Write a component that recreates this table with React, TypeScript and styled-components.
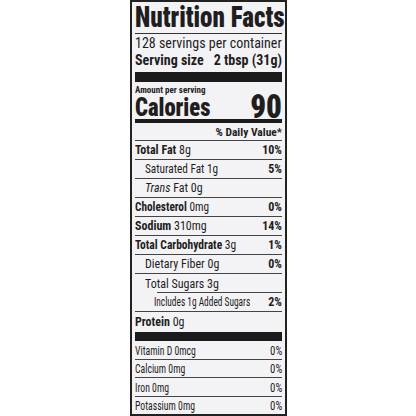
import React from 'react';
import styled, {createGlobalStyle} from 'styled-components';

const GlobalStyle = createGlobalStyle`
  html, body {
    margin: 0;
    padding: 0;
    background: #ffffff;
  }
`;

type Nutrient = {
  name: string;
  amount: string;
  dv?: string;
  bold?: boolean;
  indent?: number;
  italic?: boolean;
  ruleInset?: number;
  sx?: number;
};

const nutrients: Nutrient[] = [
  {name: 'Total Fat', amount: '8g', dv: '10%', bold: true},
  {name: 'Saturated Fat', amount: '1g', dv: '5%', indent: 10, sx: 0.94},
  {name: 'Trans', amount: 'Fat 0g', indent: 10, italic: true},
  {name: 'Cholesterol', amount: '0mg', dv: '0%', bold: true, sx: 0.94},
  {name: 'Sodium', amount: '310mg', dv: '14%', bold: true},
  {name: 'Total Carbohydrate', amount: '3g', dv: '1%', bold: true, sx: 0.96},
  {name: 'Dietary Fiber', amount: '0g', dv: '0%', indent: 10},
  {name: 'Total Sugars', amount: '3g', indent: 10, ruleInset: 22},
  {name: 'Includes 1g Added Sugars', amount: '', dv: '2%', indent: 19, sx: 0.78},
];

const vitamins = [
  {name: 'Vitamin D 0mcg', dv: '0%'},
  {name: 'Calcium 0mg', dv: '0%'},
  {name: 'Iron 0mg', dv: '0%'},
  {name: 'Potassium 0mg', dv: '0%'},
];

function App() {
  return (
    <Page>
      <GlobalStyle/>
      <Label>
        <Title><Txt $sx={0.85}>Nutrition Facts</Txt></Title>
        <Servings><Txt>128 servings per container</Txt></Servings>
        <ServingSize>
          <Txt>Serving size</Txt>
          <Txt $right>2 tbsp (31g)</Txt>
        </ServingSize>
        <AmountPer><Txt>Amount per serving</Txt></AmountPer>
        <CaloriesRow>
          <CaloriesLabel $sx={0.87}>Calories</CaloriesLabel>
          <CaloriesValue $right $sx={0.91}>90</CaloriesValue>
        </CaloriesRow>
        <DailyHeader><Txt $right>% Daily Value*</Txt></DailyHeader>
        {nutrients.map(n => (
          <Row key={n.name} $indent={n.indent || 0} $ruleInset={n.ruleInset}>
            <RowName $sx={n.sx}>
              {n.bold ? <b>{n.name}</b> : n.italic ? <i>{n.name}</i> : n.name}
              {n.amount ? ` ${n.amount}` : ''}
            </RowName>
            {n.dv && <Percent $right>{n.dv}</Percent>}
          </Row>
        ))}
        <ProteinRow>
          <Txt><b>Protein</b> 0g</Txt>
        </ProteinRow>
        {vitamins.map((v, i) => (
          <VitaminRow key={v.name} $last={i === vitamins.length - 1}>
            <RowName $sx={0.72}>{v.name}</RowName>
            <Txt $right $sx={0.8}>{v.dv}</Txt>
          </VitaminRow>
        ))}
      </Label>
    </Page>
  );
}

export default App;

const Page = styled.div`
  width: 416px;
  height: 416px;
  display: flex;
  justify-content: center;
  background: #ffffff;
  font-family: Roboto, "Liberation Sans", Arial, sans-serif;
  font-stretch: 75%;
  color: #1f1d1e;
`;

const Label = styled.div`
  box-sizing: border-box;
  width: 157px;
  height: 416px;
  margin-left: 1px;
  border: 2px solid #222;
  padding: 0 3px;
  background: #f3f3f5;
  display: flex;
  flex-direction: column;
  overflow: hidden;
`;

// condensed text: the label's type is narrower than any installed face
const Txt = styled.span<{$right?: boolean; $sx?: number}>`
  display: inline-block;
  white-space: nowrap;
  transform: scaleX(${p => p.$sx ?? 1});
  transform-origin: ${p => (p.$right ? 'right' : 'left')} center;

  b {
    font-weight: 700;
  }
`;

const RowName = styled(Txt)`
  flex: 1 1 0;
  min-width: 0;
`;

const Title = styled.div`
  box-sizing: border-box;
  height: 32px;
  border-bottom: 1px solid #333;
  font-size: 29.5px;
  font-weight: 900;
  line-height: 30px;
  white-space: nowrap;
`;

const Servings = styled.div`
  height: 17px;
  font-size: 14px;
  line-height: 19px;
`;

const ServingSize = styled.div`
  box-sizing: border-box;
  height: 31px;
  border-bottom: 10px solid #1b1b1b;
  display: flex;
  justify-content: space-between;
  font-size: 14px;
  font-weight: 700;
  line-height: 19px;
`;

const AmountPer = styled.div`
  box-sizing: border-box;
  height: 13px;
  padding-top: 3px;
  font-size: 9px;
  font-weight: 700;
  line-height: 10px;
`;

const CaloriesRow = styled.div`
  box-sizing: border-box;
  height: 28px;
  border-bottom: 4px solid #1b1b1b;
  display: flex;
  justify-content: space-between;
  align-items: flex-end;
  font-weight: 900;
`;

const CaloriesLabel = styled(Txt)`
  font-size: 26px;
  line-height: 24px;
`;

const CaloriesValue = styled(Txt)`
  font-size: 34px;
  line-height: 26px;
`;

const DailyHeader = styled.div`
  box-sizing: border-box;
  height: 18px;
  border-bottom: 1px solid #444;
  text-align: right;
  font-size: 11.5px;
  font-weight: 700;
  line-height: 18px;
`;

const Row = styled.div<{$indent: number; $ruleInset?: number}>`
  position: relative;
  box-sizing: border-box;
  height: 19px;
  padding-left: ${p => p.$indent}px;
  display: flex;
  justify-content: space-between;
  align-items: center;
  font-size: 12px;
  border-bottom: ${p => (p.$ruleInset ? 'none' : '1px solid #444')};

  &::after {
    content: '';
    display: ${p => (p.$ruleInset ? 'block' : 'none')};
    position: absolute;
    left: ${p => p.$ruleInset || 0}px;
    right: 0;
    bottom: 0;
    border-bottom: 1px solid #444;
  }
`;

const Percent = styled(Txt)`
  font-weight: 700;
`;

const ProteinRow = styled.div`
  box-sizing: border-box;
  height: 29px;
  border-bottom: 9px solid #1b1b1b;
  display: flex;
  align-items: center;
  font-size: 12px;
`;

const VitaminRow = styled.div<{$last?: boolean}>`
  box-sizing: border-box;
  height: ${p => (p.$last ? '17px' : '18.5px')};
  display: flex;
  justify-content: space-between;
  align-items: center;
  font-size: 13.5px;
  border-bottom: ${p => (p.$last ? 'none' : '1px solid #444')};
`;
